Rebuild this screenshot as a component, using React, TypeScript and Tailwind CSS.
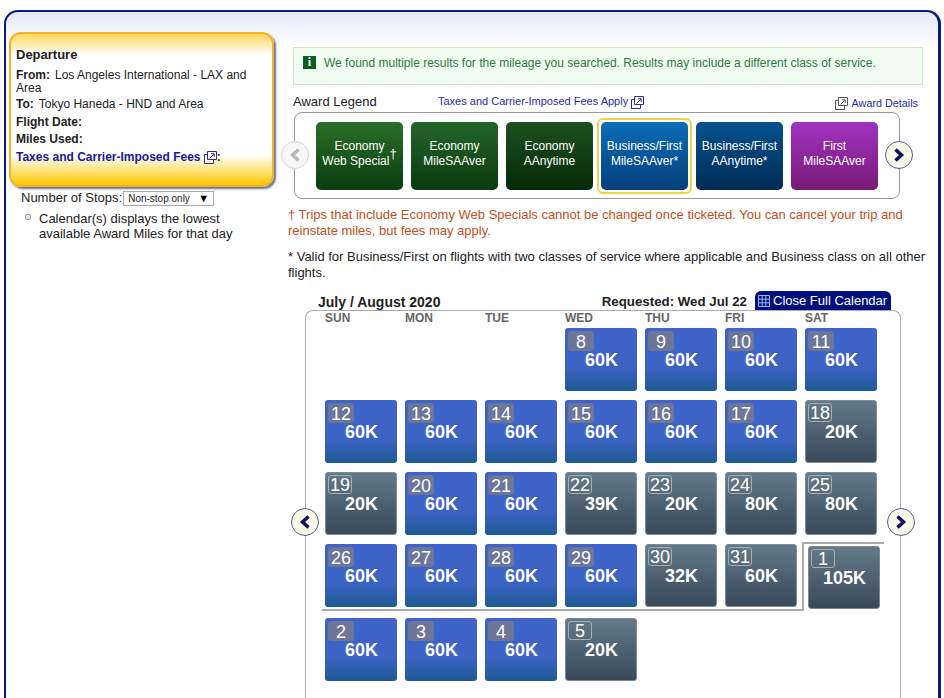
import React from 'react';

const legend = [
  { a: 'Economy', b: 'Web Special', sup: true, cls: 'bg-gradient-to-b from-[#2a6f2a] to-[#0b3d0f]' },
  { a: 'Economy', b: 'MileSAAver', cls: 'bg-gradient-to-b from-[#24662a] to-[#0a3a0e]' },
  { a: 'Economy', b: 'AAnytime', cls: 'bg-gradient-to-b from-[#1c5020] to-[#052a08]' },
  { a: 'Business/First', b: 'MileSAAver*', cls: 'bg-gradient-to-b from-[#0b6db8] to-[#06407c]', selected: true },
  { a: 'Business/First', b: 'AAnytime*', cls: 'bg-gradient-to-b from-[#05528f] to-[#012c55]' },
  { a: 'First', b: 'MileSAAver', cls: 'bg-gradient-to-b from-[#a033c0] to-[#781a78]' },
];

type Day = { d: number; p: string; g?: boolean } | null;

const rows: Day[][] = [
  [null, null, null, { d: 8, p: '60K' }, { d: 9, p: '60K' }, { d: 10, p: '60K' }, { d: 11, p: '60K' }],
  [{ d: 12, p: '60K' }, { d: 13, p: '60K' }, { d: 14, p: '60K' }, { d: 15, p: '60K' }, { d: 16, p: '60K' }, { d: 17, p: '60K' }, { d: 18, p: '20K', g: true }],
  [{ d: 19, p: '20K', g: true }, { d: 20, p: '60K' }, { d: 21, p: '60K' }, { d: 22, p: '39K', g: true }, { d: 23, p: '20K', g: true }, { d: 24, p: '80K', g: true }, { d: 25, p: '80K', g: true }],
];
const row4: Day[] = [{ d: 26, p: '60K' }, { d: 27, p: '60K' }, { d: 28, p: '60K' }, { d: 29, p: '60K' }, { d: 30, p: '32K', g: true }, { d: 31, p: '60K', g: true }];
const row5: Day[] = [{ d: 2, p: '60K' }, { d: 3, p: '60K' }, { d: 4, p: '60K' }, { d: 5, p: '20K', g: true }];

function Cell({ day }: { day: Day }) {
  if (!day) return <div className="w-[72px] h-[63px]" />;
  return (
    <div className={day.g
      ? 'w-[72px] h-[63px] rounded-[3px] border border-[#7d8a94] bg-gradient-to-b from-[#647a88] to-[#39495a] text-white'
      : 'w-[72px] h-[63px] rounded-[3px] bg-gradient-to-b from-[#3f63c9] via-[#3c63c6] via-60% to-[#1d5a94] text-white'}>
      <div className={day.g
        ? 'w-[24px] h-[19px] mt-[2px] mb-[1px] ml-[2px] pt-[1px] rounded-[3px] border border-[#a4b0b8] flex items-center justify-center text-[18px] leading-none'
        : 'w-[26px] h-[20px] mt-[3px] ml-[3px] pt-[1px] rounded-[3px] bg-[#6b7699] flex items-center justify-center text-[18px] leading-none'}>
        {day.d}
      </div>
      <div className="text-center font-bold text-[18px] leading-[20px] -mt-[1px] pl-[1px]">{day.p}</div>
    </div>
  );
}

function Arrow({ left, off, className }: { left?: boolean; off?: boolean; className: string }) {
  return (
    <div className={`absolute w-[28px] h-[28px] rounded-full border flex items-center justify-center ${off ? 'border-[#d4d4d4] bg-[#f7f7f7]' : 'border-[#5a5a9c] bg-[#f7f8e6]'} ${className}`}>
      <svg width="12" height="14" viewBox="0 0 12 14">
        <path d={left ? 'M9.5 1.5 L3.5 7 L9.5 12.5' : 'M2.5 1.5 L8.5 7 L2.5 12.5'} fill="none" stroke={off ? '#b8b8b8' : '#0f0f66'} strokeWidth="3.5" />
      </svg>
    </div>
  );
}

function ExtIcon({ color = '#2a2aa8' }: { color?: string }) {
  return (
    <svg width="13" height="13" viewBox="0 0 13 13" className="inline-block" fill="none" stroke={color} strokeWidth="1">
      <path d="M3.5 .5h9v8h-9z" />
      <path d="M3.5 3.5h-3v9h9v-4" />
      <path d="M5.5 7.5l4.5-4.5M7 2.8h3.2v3.2" />
    </svg>
  );
}

export default function App() {
  return (
    <div className="h-[698px] w-[944px] overflow-hidden bg-white font-['Liberation_Sans',Arial,sans-serif] text-[12px] text-[#222]">
      <div className="ml-[4px] mt-[10px] w-[937px] h-[688px] border-[2px] border-r-[3px] border-b-0 border-[#0a1a85] rounded-t-[14px] bg-gradient-to-b from-[#e4e9fa] via-white via-[5%] to-white flex">
        {/* left column */}
        <div className="w-[282px] shrink-0 pt-[20px] pl-[3px]">
          <div className="w-[265px] h-[155px] rounded-[12px] border-[2px] border-[#f4b324] bg-[linear-gradient(to_bottom,#ffd75a_0%,#ffffff_14%,#ffffff_80%,#ffc800_100%)] shadow-[2px_2px_2px_#6a7396] pl-[5px] pr-[8px] pt-[13px]">
            <div className="font-bold text-[13px] leading-[16px] mb-[6px]">Departure</div>
            <div className="leading-[13px] mb-[2px]"><b className="mr-[5px]">From:</b>Los Angeles International - LAX and Area</div>
            <div className="leading-[14px] mb-[4px]"><b className="mr-[5px]">To:</b>Tokyo Haneda - HND and Area</div>
            <div className="font-bold leading-[14px] mb-[3px]">Flight Date:</div>
            <div className="font-bold leading-[14px] mb-[4px]">Miles Used:</div>
            <div className="font-bold leading-[14px] text-[#1a1aa0]">Taxes and Carrier-Imposed Fees <ExtIcon /><span className="text-[#222]">:</span></div>
          </div>
          <div className="pl-[12px] mt-[3px] flex items-center gap-[1px] h-[16px] text-[13px]">
            <span>Number of Stops:</span>
            <div className="w-[91px] h-[15px] border border-[#aaa] flex items-center justify-between px-[4px] text-[10px]">
              <span>Non-stop only</span>
              <span className="text-[11px] leading-none text-black">▼</span>
            </div>
          </div>
          <div className="flex mt-[5px] pl-[16px] text-[13px]">
            <div className="w-[6px] h-[6px] mt-[3px] mr-[8px] rounded-[2px] border border-[#999] bg-[#e8e8e8] shrink-0" />
            <div className="leading-[15px]">Calendar(s) displays the lowest<br />available Award Miles for that day</div>
          </div>
        </div>

        {/* right column */}
        <div className="relative w-[640px] pt-[35px]">
          <div className="ml-[5px] w-[630px] h-[38px] border border-[#cfe6bf] bg-[#f1fdf0] flex items-start pt-[8px] pl-[9px] text-[#2c7a3c] leading-[15px]">
            <div className="w-[13px] h-[13px] bg-[#0d5c20] text-white font-bold font-['Liberation_Serif',serif] text-[12px] leading-[13px] text-center mr-[8px]">i</div>
            We found multiple results for the mileage you searched. Results may include a different class of service.
          </div>
          <div className="ml-[5px] mt-[8px] w-[625px] h-[18px] flex items-end">
            <span className="text-[13px] leading-[18px] text-[#222] w-[145px]">Award Legend</span>
            <span className="text-[11px] leading-[16px] mb-[2px] text-[#2a2aa8]">Taxes and Carrier-Imposed Fees Apply <ExtIcon /></span>
            <span className="ml-auto text-[10.8px] leading-[14px] mb-[1px] text-[#2a2aa8] flex items-center gap-[4px]"><ExtIcon color="#555" />Award Details</span>
          </div>
          <div className="relative ml-[6px] w-[606px] h-[87px] mt-[1px] border border-[#999] rounded-[8px] pl-[21px] flex items-center gap-[8px]">
            {legend.map((l) => (
              <div key={l.a + l.b} className={l.selected ? 'rounded-[6px] border-[2px] border-[#f5d33a] p-[2px] -mx-[4px]' : ''}>
                <div className={`w-[87px] h-[68px] pb-[4px] rounded-[5px] text-white text-center flex flex-col justify-center leading-[15px] ${l.cls}`}>
                  <div>{l.a}</div>
                  <div>{l.b}{l.sup && <sup className="text-[13px] leading-none">†</sup>}</div>
                </div>
              </div>
            ))}
            <Arrow left off className="-left-[14px] top-[28px]" />
            <Arrow className="-right-[14px] top-[28px]" />
          </div>
          <div className="mt-[8px] leading-[16px] text-[13px] text-[#c2501c] w-[630px]">† Trips that include Economy Web Specials cannot be changed once ticketed. You can cancel your trip and reinstate miles, but fees may apply.</div>
          <div className="mt-[10px] leading-[16px] text-[13px] w-[640px]">* Valid for Business/First on flights with two classes of service where applicable and Business class on all other flights.</div>

          <div className="ml-[17px] w-[586px] mt-[10px] h-[19px] flex items-end">
            <span className="ml-[13px] font-bold text-[14px] leading-[16px]">July / August 2020</span>
            <span className="ml-auto mr-[8px] font-bold text-[13.3px] leading-[16px]">Requested: Wed Jul 22</span>
            <div className="w-[136px] h-[19px] rounded-t-[6px] bg-[#00107f] text-white text-[13px] flex items-center pl-[3px] gap-[3px]">
              <svg width="12" height="12" viewBox="0 0 12 12" fill="none" stroke="#9fb4f0" strokeWidth="1"><path d="M.5.5h11v11H.5zM.5 4.2h11M.5 7.8h11M4.2.5v11M7.8.5v11" /></svg>
              Close Full Calendar
            </div>
          </div>
          <div className="relative ml-[17px] w-[596px] h-[400px] border border-b-0 border-[#aaa] rounded-t-[8px]">
            <div className="grid grid-cols-[repeat(7,80px)] pl-[19px] h-[17px] font-bold text-[#666] leading-[14px]">
              {['SUN', 'MON', 'TUE', 'WED', 'THU', 'FRI', 'SAT'].map((d) => <div key={d}>{d}</div>)}
            </div>
            <div className="pl-[19px] flex flex-col gap-[9px]">
              {rows.map((r, i) => (
                <div key={i} className="grid grid-cols-[repeat(7,80px)]">
                  {r.map((c, j) => <Cell key={j} day={c} />)}
                </div>
              ))}
            </div>
            <div className="flex ml-[16px]">
              <div className="w-[482px] h-[69px] mt-[7px] border-b-[2px] border-r-[2px] border-[#aaa] pl-[3px] pt-[2px] grid grid-cols-[repeat(6,80px)]">
                {row4.map((c, j) => <Cell key={j} day={c} />)}
              </div>
              <div className="w-[80px] mt-[7px] border-t-[2px] border-[#aaa] pl-[4px] pt-[2px] h-[60px]">
                <Cell day={{ d: 1, p: '105K', g: true }} />
              </div>
            </div>
            <div className="pl-[19px] mt-[7px] grid grid-cols-[repeat(7,80px)]">
              {row5.map((c, j) => <Cell key={j} day={c} />)}
            </div>
            <Arrow left className="-left-[15px] top-[197px]" />
            <Arrow className="-right-[15px] top-[197px]" />
          </div>
        </div>
      </div>
    </div>
  );
}
